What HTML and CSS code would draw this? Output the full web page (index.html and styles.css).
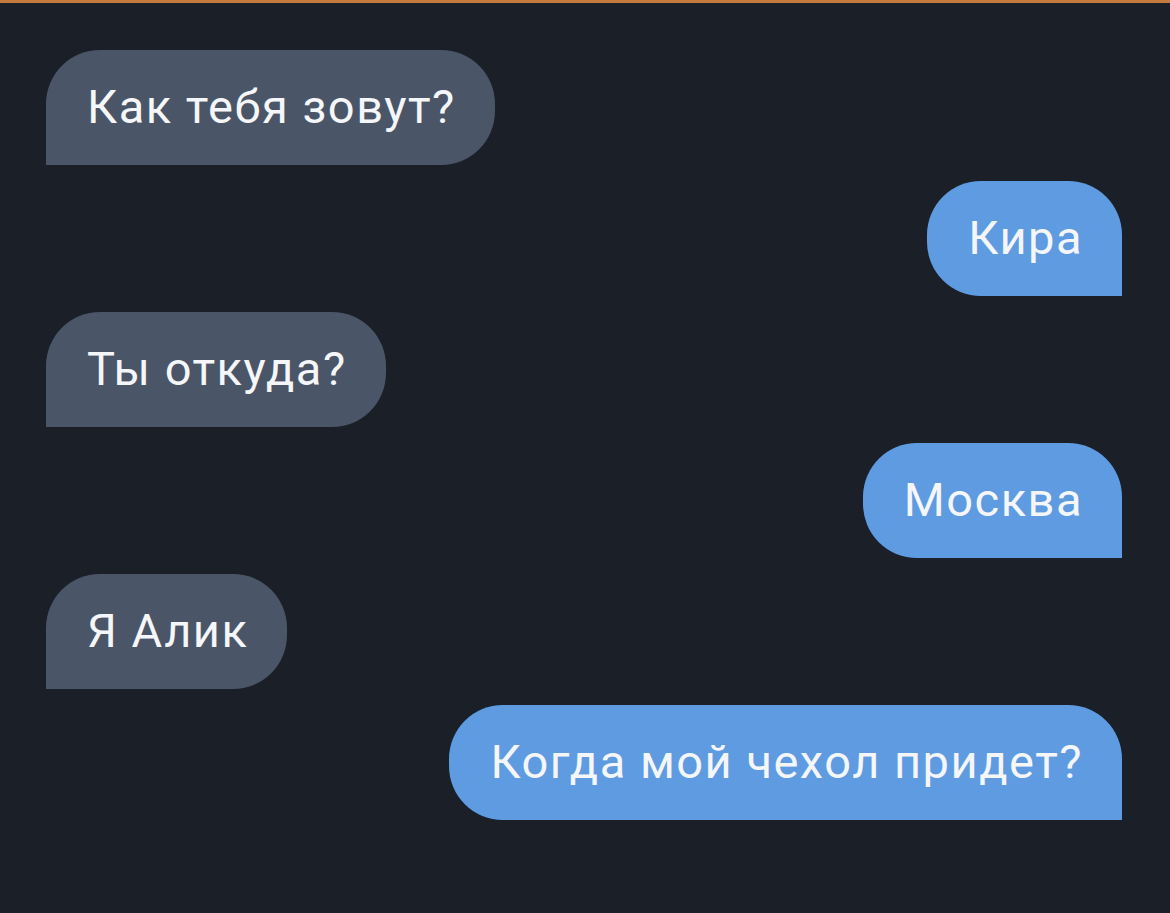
FILE: index.html
```html
<!DOCTYPE html>
<html lang="ru">
<head>
    <meta charset="UTF-8">
    <meta name="viewport" content="width=device-width, initial-scale=1.0">
    <title>Чат</title>
    <link rel="stylesheet" href="styles.css">
</head>
<body>

    <div class="chat">
        <div class="msg msg-in">Как тебя зовут?</div>
        <div class="msg msg-out">Кира</div>
        <div class="msg msg-in">Ты откуда?</div>
        <div class="msg msg-out">Москва</div>
        <div class="msg msg-in">Я Алик</div>
        <div class="msg msg-out">Когда мой чехол придет?</div>
    </div>

</body>
</html>
```

FILE: styles.css
```css
body {
    margin: 0;
    height: 913px;
    background-color: #1a1f28;
    border-top: 3px solid #c47a3c;
    box-sizing: border-box;
    font-family: Roboto, "Noto Sans", sans-serif;
    overflow: hidden;
}
.chat {
    display: flex;
    flex-direction: column;
    gap: 16px;
    padding: 47px 48px 0 46px;
}
.msg {
    height: 115px;
    box-sizing: border-box;
    display: flex;
    align-items: center;
    padding: 0 39px 2px 41px;
    font-size: 47px;
    letter-spacing: 1.5px;
    color: #f4f6f9;
    border-radius: 54px;
}
.msg-in {
    align-self: flex-start;
    background-color: #4a5567;
    border-bottom-left-radius: 0;
}
.msg-out {
    align-self: flex-end;
    background-color: #5f9be1;
    border-bottom-right-radius: 0;
}
```
